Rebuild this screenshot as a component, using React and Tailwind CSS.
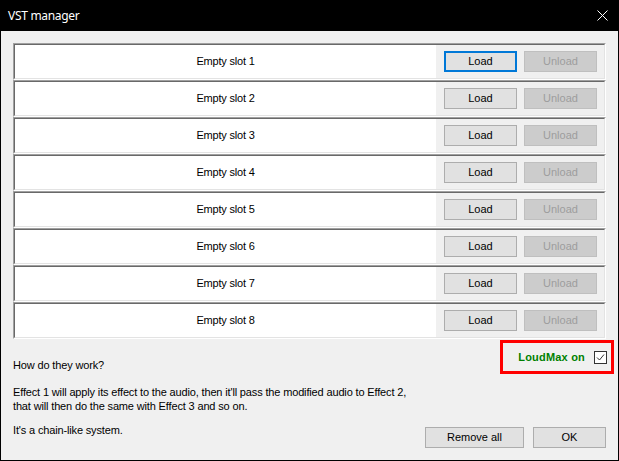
const FONT = { fontFamily: '"Liberation Sans", Arial, sans-serif' };

function Row({ n }) {
  return (
    <div className="h-[37px] border-t border-l border-b border-r border-t-[#a0a0a0] border-l-[#a0a0a0] border-b-white border-r-white">
      <div className="h-full flex border-t border-l border-b border-r border-t-[#696969] border-l-[#696969] border-b-[#e3e3e3] border-r-[#e3e3e3]">
        <div className="w-[421px] bg-white flex items-center justify-center text-[11px] tracking-[-0.2px] text-black">
          Empty slot {n}
        </div>
        <div className="flex-1 flex items-center gap-[7px] pl-[8px]">
          <div
            className={
              n === 1
                ? "w-[73px] h-[21px] border-2 border-[#0078d7] bg-[#e1e1e1] flex items-center justify-center text-[11px] text-black"
                : "w-[73px] h-[21px] border border-[#adadad] bg-[#e1e1e1] flex items-center justify-center text-[11px] text-black"
            }
          >
            Load
          </div>
          <div className="w-[73px] h-[21px] border border-[#bfbfbf] bg-[#cccccc] flex items-center justify-center text-[11px] text-[#9d9d9d]">
            Unload
          </div>
        </div>
      </div>
    </div>
  );
}

export default function App() {
  const slots = [1, 2, 3, 4, 5, 6, 7, 8];
  return (
    <div className="w-[619px] h-[461px] bg-black flex flex-col" style={FONT}>
      <div className="h-[31px] flex items-center justify-between pl-[8px] pr-[11px] text-white">
        <span className="text-[12px] tracking-[-0.3px]" style={{ fontFamily: '"Segoe UI", "Noto Sans", sans-serif' }}>
          VST manager
        </span>
        <svg width="11" height="11" viewBox="0 0 11 11">
          <path d="M0.5 0.5 L10.5 10.5 M10.5 0.5 L0.5 10.5" stroke="white" strokeWidth="1" />
        </svg>
      </div>
      <div className="flex-1 mx-px mb-px bg-[#f0f0f0] px-[12px] pt-[12px] pb-[12px] flex flex-col">
        {slots.map((n) => (
          <Row key={n} n={n} />
        ))}
        <div className="h-[109px] flex justify-between text-[11px] text-black">
          <div className="flex flex-col leading-[13px] tracking-[-0.15px]">
            <p className="mt-[20px]">How do they work?</p>
            <p className="mt-[13px] leading-[14px]">
              Effect 1 will apply its effect to the audio, then it'll pass the modified audio to Effect 2,
              <br />
              that will then do the same with Effect 3 and so on.
            </p>
            <p className="mt-[11px]">It's a chain-like system.</p>
          </div>
          <div className="flex flex-col items-end justify-between">
            <div className="mt-px -mr-[8px] w-[114px] h-[34px] border-[3px] border-[#ff0000] flex items-center justify-end gap-[9px] pr-[4px]">
              <span className="font-bold text-[#008000] text-[11px] tracking-[0.2px]">LoudMax on</span>
              <svg width="13" height="13" viewBox="0 0 13 13">
                <rect x="0.5" y="0.5" width="12" height="12" fill="white" stroke="#333333" strokeWidth="1" />
                <path d="M3 6.5 L5.5 9 L10 3.5" fill="none" stroke="#333333" strokeWidth="1" />
              </svg>
            </div>
            <div className="flex gap-[9px]">
              <div className="w-[99px] h-[21px] border border-[#adadad] bg-[#e1e1e1] flex items-center justify-center">
                Remove all
              </div>
              <div className="w-[73px] h-[21px] border border-[#adadad] bg-[#e1e1e1] flex items-center justify-center">
                OK
              </div>
            </div>
          </div>
        </div>
      </div>
    </div>
  );
}
